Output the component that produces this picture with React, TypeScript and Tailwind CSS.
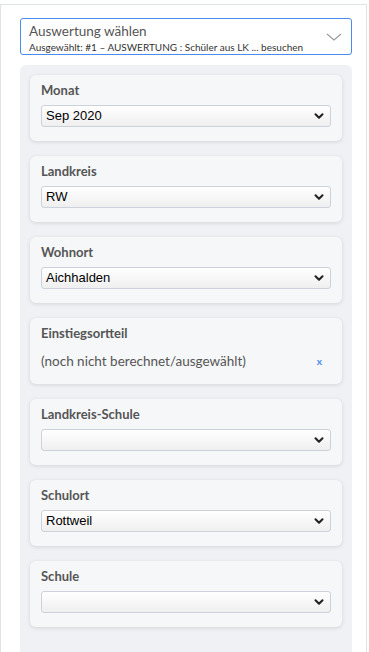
import { ChevronDown } from "lucide-react";

const FIELDS: { label: string; value?: string; note?: string }[] = [
  { label: "Monat", value: "Sep 2020" },
  { label: "Landkreis", value: "RW" },
  { label: "Wohnort", value: "Aichhalden" },
  { label: "Einstiegsortteil", note: "(noch nicht berechnet/ausgewählt)" },
  { label: "Landkreis-Schule", value: "" },
  { label: "Schulort", value: "Rottweil" },
  { label: "Schule", value: "" },
];

function SelectBox({ value }: { value: string }) {
  return (
    <div className="flex h-[22px] items-center justify-between rounded-[3px] border border-[#cdd1db] bg-gradient-to-b from-white to-[#efefef] pl-[4px] pr-[4px] font-['Liberation_Sans',Arial,sans-serif] text-[13px] text-black">
      <span>{value}</span>
      <ChevronDown className="h-[14px] w-[14px] text-[#222]" strokeWidth={3.5} />
    </div>
  );
}

export default function App() {
  return (
    <div className="h-[652px] w-[369px] overflow-hidden bg-white pt-[4px] font-['Lato','Open_Sans',sans-serif]">
      <div className="h-full w-[367px] border-l border-r border-t border-[#dfe2e6] pl-[19px] pr-[14px] pt-[13px]">
        {/* Auswahl */}
        <div className="flex h-[37px] items-start justify-between overflow-hidden rounded-[3px] border border-[#4a8bf0] pl-[8px] pr-[8px] pt-[3px]">
          <div className="min-w-0">
            <div className="text-[13.5px] leading-[18px] text-[#555]">Auswertung wählen</div>
            <div className="mt-[1px] text-[10px] leading-[13px] text-[#333]">
              Ausgewählt: #1 – AUSWERTUNG : Schüler aus LK ... besuchen Schule
            </div>
          </div>
          <svg width="16" height="10" viewBox="0 0 16 10" className="mr-[1px] mt-[10px] shrink-0">
            <path d="M1 2 L8 8 L15 2" fill="none" stroke="#999" strokeWidth="1.1" />
          </svg>
        </div>

        {/* Filter */}
        <div className="mt-[10px] h-full rounded-t-[6px] bg-[#f0f1f5] px-[10px] pt-[10px]">
          <div className="flex flex-col gap-[15px]">
            {FIELDS.map((f) => (
              <div
                key={f.label}
                className="h-[66px] rounded-[6px] bg-[#f6f7f9] px-[11px] pt-[6px] shadow-[0_1px_4px_rgba(0,0,0,0.12)]"
              >
                <div className="text-[13px] font-bold leading-[18px] text-[#555]">{f.label}</div>
                {f.note !== undefined ? (
                  <div className="mt-[9px] flex items-center justify-between pr-[9px] text-[13.5px] text-[#555]">
                    <span>{f.note}</span>
                    <span className="text-[10px] font-bold text-[#4a8bf0]">x</span>
                  </div>
                ) : (
                  <div className="mt-[6px]">
                    <SelectBox value={f.value ?? ""} />
                  </div>
                )}
              </div>
            ))}
          </div>
        </div>
      </div>
    </div>
  );
}
